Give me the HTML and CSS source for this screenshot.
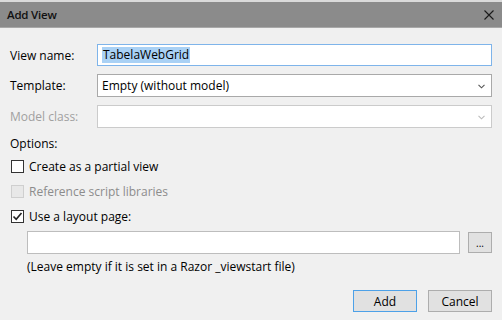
FILE: index.html
```html
<!DOCTYPE html>
<html lang="en">
<head>
    <meta charset="UTF-8">
    <title>Add View</title>
    <link rel="stylesheet" href="styles.css">
</head>
<body>
  <div class="dialog">
    <div class="titlebar">
      <span class="title">Add View</span>
      <svg class="close" width="10" height="10" viewBox="0 0 10 10"><path d="M0.5 0.5 L9.5 9.5 M9.5 0.5 L0.5 9.5" stroke="#1a1a1a" stroke-width="1.1" fill="none"/></svg>
    </div>

    <div class="content">
      <div class="row">
        <label class="label">View name:</label>
        <div class="field text focused"><span class="selected">TabelaWebGrid</span></div>
      </div>
      <div class="row">
        <label class="label">Template:</label>
        <div class="field select">
          <span>Empty (without model)</span>
          <svg class="arrow" width="7" height="5" viewBox="0 0 7 5"><path d="M0.5 0.8 L3.5 3.8 L6.5 0.8" stroke="#555" stroke-width="1.1" fill="none"/></svg>
        </div>
      </div>
      <div class="row">
        <label class="label disabled">Model class:</label>
        <div class="field select off">
          <span></span>
          <svg class="arrow" width="7" height="5" viewBox="0 0 7 5"><path d="M0.5 0.8 L3.5 3.8 L6.5 0.8" stroke="#bbb" stroke-width="1.1" fill="none"/></svg>
        </div>
      </div>

      <div class="options-label">Options:</div>

      <div class="checks">
        <div class="check-row">
          <span class="box"></span>
          <span>Create as a partial view</span>
        </div>
        <div class="check-row disabled">
          <span class="box off"></span>
          <span>Reference script libraries</span>
        </div>
        <div class="check-row">
          <span class="box"><svg width="11" height="11" viewBox="0 0 11 11"><path d="M1.5 5.5 L4.2 8.3 L9.5 2" stroke="#222" stroke-width="1.6" fill="none"/></svg></span>
          <span>Use a layout page:</span>
        </div>
      </div>

      <div class="layout-row">
        <div class="field text wide"></div>
        <button class="btn small">...</button>
      </div>
      <div class="hint">(Leave empty if it is set in a Razor _viewstart file)</div>

      <div class="actions">
        <button class="btn default">Add</button>
        <button class="btn">Cancel</button>
      </div>
    </div>
  </div>
</body>
</html>
```

FILE: styles.css
```css
body {
  margin: 0;
  font-family: "Open Sans", "Noto Sans", sans-serif;
  font-size: 12px;
  color: #000;
  background: #f0f0f0;
}
.dialog {
  width: 502px;
  height: 320px;
  background: #f0f0f0;
  border-top: 2px solid #dadada;
  box-sizing: border-box;
}
.titlebar {
  height: 25px;
  background: #8b8b8b;
  border-bottom: 1px solid #a8a8a8;
  display: flex;
  align-items: center;
  justify-content: space-between;
  padding: 0 8px 0 7px;
}
.title {
  font-size: 11.5px;
  font-weight: 600;
  color: #111;
  letter-spacing: -0.2px;
}
.close {
  margin-top: 1px;
}
.content {
  padding: 16px 10px 0 10px;
}
.row {
  display: flex;
  align-items: center;
  margin-bottom: 8px;
}
.label {
  width: 87px;
}
.label.disabled {
  color: #a0a0a0;
}
.field {
  flex: 1;
  height: 22px;
  box-sizing: border-box;
  background: #fff;
  border: 1px solid #abadb3;
  display: flex;
  align-items: center;
  padding: 0 4px;
}
.field.focused {
  border-color: #7eb4ea;
}
.selected {
  background: #a9d1f5;
  padding: 0 1px;
  line-height: 16px;
}
.field.select {
  height: 23px;
  justify-content: space-between;
  border-color: #a9a9a9;
}
.field.select.off {
  border-color: #cbcbcb;
}
.arrow {
  margin-right: 2px;
  margin-top: 1px;
}
.options-label {
  margin-top: 2px;
  line-height: 16px;
}
.checks {
  margin-top: 2px;
}
.check-row {
  height: 25px;
  display: flex;
  align-items: center;
  gap: 5px;
  padding-left: 1px;
}
.check-row.disabled {
  color: #8c8c8c;
}
.box {
  width: 13px;
  height: 13px;
  box-sizing: border-box;
  border: 1px solid #333;
  background: #fff;
  display: flex;
  align-items: center;
  justify-content: center;
}
.box.off {
  border-color: #cfcfcf;
  background: #e8e8e8;
}
.layout-row {
  display: flex;
  align-items: center;
  gap: 8px;
  margin: 2px 0 0 17px;
}
.field.wide {
  height: 23px;
  border-color: #bdbdbd;
}
.btn {
  font-family: inherit;
  font-size: 12px;
  background: #e1e1e1;
  border: 1px solid #adadad;
  color: #000;
  padding: 0;
  height: 22px;
}
.btn.small {
  width: 24px;
  height: 21px;
  font-size: 10px;
  line-height: 12px;
}
.hint {
  margin: 5px 0 0 17px;
  line-height: 16px;
}
.actions {
  display: flex;
  justify-content: flex-end;
  gap: 11px;
  margin-top: 15px;
}
.actions .btn {
  width: 64px;
}
.btn.default {
  border-color: #4da1e8;
}
```
